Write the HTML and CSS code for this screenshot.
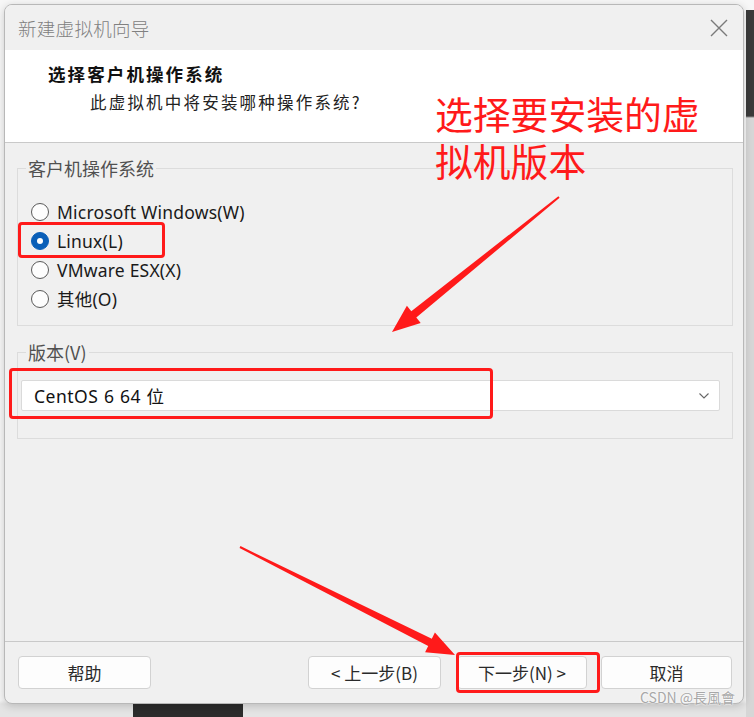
FILE: index.html
```html
<!DOCTYPE html>
<html lang="zh-CN">
<head>
<meta charset="utf-8">
<title>新建虚拟机向导</title>
<link rel="stylesheet" href="styles.css">
</head>
<body>
<div class="screen">
  <div class="desk-strip"></div>
  <div class="desk-block"></div>

  <div class="dialog">
    <div class="titlebar">
      <span class="title">新建虚拟机向导</span>
      <svg class="close" width="18" height="18" viewBox="0 0 18 18"><path d="M1 1L17 17M17 1L1 17" stroke="#7a7a7a" stroke-width="1.4" fill="none"/></svg>
    </div>
    <div class="header">
      <div class="h-title">选择客户机操作系统</div>
      <div class="h-sub">此虚拟机中将安装哪种操作系统?</div>
    </div>
    <div class="body">
      <fieldset class="group g-os">
        <legend>客户机操作系统</legend>
        <div class="radios">
          <div class="radio-row"><span class="radio"></span><span>Microsoft Windows(W)</span></div>
          <div class="radio-row"><span class="radio checked"></span><span>Linux(L)</span></div>
          <div class="radio-row"><span class="radio"></span><span>VMware ESX(X)</span></div>
          <div class="radio-row"><span class="radio"></span><span>其他(O)</span></div>
        </div>
      </fieldset>
      <fieldset class="group g-ver">
        <legend>版本(V)</legend>
        <div class="select">
          <span>CentOS 6 64 位</span>
          <svg width="12" height="8" viewBox="0 0 12 8"><path d="M1.5 1.5L6 6L10.5 1.5" stroke="#666" stroke-width="1.1" fill="none"/></svg>
        </div>
      </fieldset>
    </div>
    <div class="footer">
      <button class="btn btn-help">帮助</button>
      <div class="spacer"></div>
      <button class="btn btn-back">&lt; 上一步(B)</button>
      <button class="btn btn-next">下一步(N) &gt;</button>
      <button class="btn btn-cancel">取消</button>
    </div>
  </div>

  <div class="mark mark-linux"></div>
  <div class="mark mark-select"></div>
  <div class="mark mark-next"></div>

  <div class="note">选择要安装的虚<br>拟机版本</div>

  <svg class="arrows" width="754" height="717" viewBox="0 0 754 717">
    <polygon fill="#ff1a1a" points="559.6,197.8 416.3,317.5 420.7,323.0 392,332 406.9,305.8 411.3,311.3 558.4,196.2"/>
    <polygon fill="#ff1a1a" points="239.55,547.9 428.2,646.0 425.1,652.2 455,655 434.9,632.6 431.8,638.8 240.45,546.1"/>
  </svg>

  <div class="watermark">CSDN @長風會</div>
</div>
</body>
</html>
```

FILE: styles.css
```css
* { box-sizing: border-box; }
html, body { margin: 0; padding: 0; }
body {
  background: #f4f4f4;
  font-family: "Noto Sans", "Noto Sans CJK SC", sans-serif;
}
.screen {
  position: relative;
  width: 754px;
  height: 717px;
  overflow: hidden;
  background: linear-gradient(#f7f7f7 0, #f7f7f7 700px, #e4e4e4 704px, #e4e4e4 100%);
  padding: 4px 0 0 4px;
}
.desk-strip {
  position: absolute;
  left: 746px;
  top: 10px;
  width: 8px;
  height: 707px;
  background: linear-gradient(#3a3a3a 0, #3a3a3a 106px, #d6d6d6 108px, #d6d6d6 100%);
}
.desk-block {
  position: absolute;
  left: 133px;
  top: 702px;
  width: 110px;
  height: 15px;
  background: #2c2c2c;
}
.dialog {
  position: relative;
  width: 740px;
  height: 700px;
  border: 1px solid #b8b8b8;
  border-radius: 8px;
  overflow: hidden;
  background: #f0f0f0;
  box-shadow: 0 2px 8px rgba(0,0,0,0.18);
  display: flex;
  flex-direction: column;
}
.titlebar {
  height: 45px;
  flex: none;
  display: flex;
  align-items: center;
  justify-content: space-between;
  padding: 0 15px 0 13px;
  background: #f0f0f0;
}
.title {
  font-family: "Noto Sans CJK SC", sans-serif;
  font-size: 18.5px;
  font-weight: 300;
  color: #808080;
  letter-spacing: 0.3px;
}
.close { display: block; }
.header {
  flex: none;
  height: 93px;
  background: #ffffff;
  border-bottom: 1px solid #c9c9c9;
  padding: 12px 0 0 43px;
}
.h-title {
  font-family: "Noto Sans CJK SC", sans-serif;
  font-weight: 700;
  font-size: 17.5px;
  letter-spacing: 2.1px;
  line-height: 24px;
  color: #111;
}
.h-sub {
  font-family: "Noto Sans CJK SC", sans-serif;
  font-size: 16.5px;
  letter-spacing: 2.2px;
  line-height: 24px;
  margin: 4px 0 0 42px;
  color: #222;
}
.body {
  flex: 1;
  padding: 14px 10px 0 12px;
}
.group {
  margin: 0;
  border: 1px solid #dcdcdc;
  min-width: 0;
}
.group legend {
  font-family: "Noto Sans CJK SC", sans-serif;
  font-size: 18px;
  line-height: 22px;
  color: #505050;
  padding: 0 2px;
}
.g-os {
  padding: 0 0 12px 8px;
}
.radios {
  margin: 18px 0 0 5px;
}
.radio-row {
  height: 29px;
  display: flex;
  align-items: center;
  gap: 8px;
  font-size: 17.5px;
  letter-spacing: 0.2px;
  color: #1a1a1a;
}
.radio-row span:last-child {
  font-family: "Noto Sans", "Noto Sans CJK SC", sans-serif;
}
.radio {
  width: 18px;
  height: 18px;
  border-radius: 50%;
  border: 1px solid #5a5a5a;
  background: #fdfdfd;
  flex: none;
  position: relative;
}
.radio.checked {
  border-color: #0a5fb8;
  background: #0a5fb8;
}
.radio.checked::after {
  content: "";
  position: absolute;
  left: 5px;
  top: 5px;
  width: 6px;
  height: 6px;
  border-radius: 50%;
  background: #fff;
}
.g-ver {
  margin-top: 15px;
  padding: 17px 12px 27px 3px;
}
.g-ver legend {
  margin-left: 5px;
}
.select {
  height: 31px;
  background: #fff;
  border: 1px solid #dadada;
  border-radius: 2px;
  display: flex;
  align-items: center;
  justify-content: space-between;
  padding: 0 9px 0 12px;
  font-size: 17.5px;
  color: #111;
}
.select span {
  font-family: "Noto Sans", "Noto Sans CJK SC", sans-serif;
  letter-spacing: 0.5px;
  word-spacing: 0.5px;
}
.footer {
  flex: none;
  height: 62px;
  border-top: 1px solid #c9c9c9;
  display: flex;
  align-items: flex-start;
  padding: 14px 11px 0 13px;
}
.spacer { flex: 1; }
.btn {
  height: 33px;
  width: 131px;
  background: #fdfdfd;
  border: 1px solid #d2d2d2;
  border-radius: 4px;
  font-family: "Noto Sans CJK SC", sans-serif;
  font-size: 17px;
  color: #2a2a2a;
  padding: 0;
}
.btn-help { width: 133px; }
.btn-back { width: 133px; }
.btn-next { margin-left: 16px; width: 130px; }
.btn-cancel { margin-left: 14px; }
.mark {
  position: absolute;
  border: 3px solid #ff1a1a;
  border-radius: 4px;
}
.mark-linux { left: 18px; top: 222px; width: 147px; height: 36px; }
.mark-select { left: 9px; top: 368px; width: 484px; height: 51px; }
.mark-next { left: 456px; top: 652px; width: 144px; height: 41px; }
.note {
  position: absolute;
  left: 435px;
  top: 89px;
  font-family: "Noto Sans CJK SC", sans-serif;
  font-size: 37.8px;
  line-height: 47px;
  color: #ff1a1a;
}
.arrows {
  position: absolute;
  left: 0;
  top: 0;
  pointer-events: none;
}
.watermark {
  position: absolute;
  left: 640px;
  top: 687px;
  font-family: "Noto Sans CJK SC", sans-serif;
  font-size: 14px;
  color: #a8a8a8;
  text-shadow: 0 0 2px #fff, 0 0 2px #fff;
}
```
